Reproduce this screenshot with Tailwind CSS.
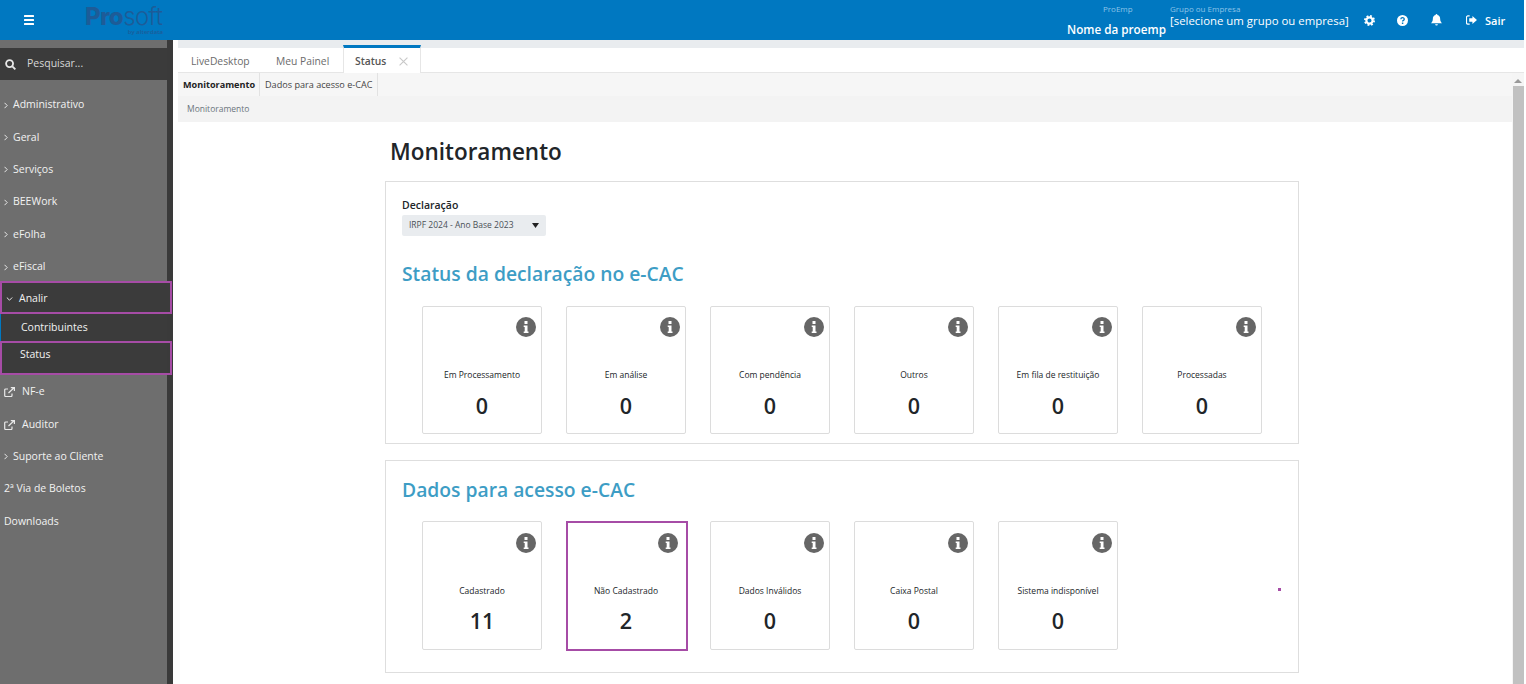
<!DOCTYPE html>
<html lang="pt-BR">
<head>
    <meta charset="UTF-8">
    <meta name="viewport" content="width=device-width, initial-scale=1.0">
    <title>Monitoramento</title>
    <script src="https://cdn.jsdelivr.net/npm/@tailwindcss/browser@4"></script>
</head>
<body class="h-[684px] overflow-hidden bg-white font-['Open_Sans',sans-serif] text-[#212529]">
    <!-- topo -->
    <header class="h-10 w-[1524px] bg-[#0078c1] flex items-center text-white">
        <div class="w-[85px] pl-6 flex">
            <svg class="w-[10px] h-[10px]" viewBox="0 0 10 10" fill="#fff"><rect width="10" height="2" rx=".5"/><rect y="4" width="10" height="2" rx=".5"/><rect y="8" width="10" height="2" rx=".5"/></svg>
        </div>
        <div class="w-[78px] h-[32px] flex flex-col text-[#1d5c98] -mt-[1px]">
            <div class="text-[24px] leading-[25px] tracking-[-0.6px] font-['Inter',sans-serif] whitespace-nowrap"><span class="font-extrabold">Pro</span><span class="font-light">soft</span></div>
            <div class="text-[6px] leading-[6px] text-right font-semibold">by alterdata</div>
        </div>
        <div class="ml-[904px] w-[103px] flex flex-col h-10 items-start">
            <div class="ml-[36px] mt-[3px] text-[8px] leading-[11px] text-[#8cc3e8]">ProEmp</div>
            <div class="mt-[6px] text-[11.700px] leading-[18px] font-semibold whitespace-nowrap">Nome da proemp</div>
        </div>
        <div class="w-[183px] flex flex-col h-10 items-start">
            <div class="mt-[3px] text-[8px] leading-[11px] text-[#8cc3e8]">Grupo ou Empresa</div>
            <div class="text-[11.400px] leading-[13px] whitespace-nowrap">[selecione um grupo ou empresa]</div>
        </div>
        <div class="flex items-center">
            <svg class="ml-[11px] w-[11px] h-[11px]" viewBox="0 0 12 12"><circle cx="6" cy="6" r="3.400" fill="none" stroke="#fff" stroke-width="2.400"/><circle cx="6" cy="6" r="5" fill="none" stroke="#fff" stroke-width="2" stroke-dasharray="2 1.930"/></svg>
            <svg class="ml-[22px] w-[11px] h-[11px]" viewBox="0 0 12 12"><circle cx="6" cy="6" r="6" fill="#fff"/><path d="M4.200 4.700c0-2.300 3.700-2.300 3.700-.2 0 1.400-1.800 1.300-1.800 2.600" fill="none" stroke="#0078c1" stroke-width="1.400"/><rect x="5.300" y="8.200" width="1.600" height="1.600" fill="#0078c1"/></svg>
            <svg class="ml-[23px] w-[11px] h-[12px]" viewBox="0 0 12 13" fill="#fff"><path d="M6 0a1 1 0 0 1 1 1.100C9.200 1.500 10 3.300 10 5.500c0 2.500 1 3.500 2 4.500H0c1-1 2-2 2-4.500C2 3.300 2.800 1.500 5 1.100A1 1 0 0 1 6 0zM4.500 11h3a1.500 1.500 0 0 1-3 0z"/></svg>
            <svg class="ml-[24px] w-[11px] h-[10px]" viewBox="0 0 12 11" fill="#fff"><path d="M4 1H2a1.500 1.500 0 0 0-1.500 1.500v6A1.500 1.500 0 0 0 2 10h2" fill="none" stroke="#fff" stroke-width="1.300"/><path d="M7 1.200 12 5.500 7 9.800V7.300H3.500V3.700H7z"/></svg>
            <span class="ml-[8px] text-[11px] font-semibold leading-none">Sair</span>
        </div>
    </header>

    <div class="flex h-[644px]">
        <!-- menu lateral -->
        <aside class="w-[167px] shrink-0 bg-[#6e6e6e] text-[#f2f2f2] text-[10.500px] font-medium pt-2">
            <div class="h-8 bg-[#3b3b3b] flex items-center pl-[5px] font-normal text-[#d8d8d8]">
                <svg class="w-[11px] h-[11px]" viewBox="0 0 12 12" fill="none" stroke="#e8e8e8" stroke-width="2"><circle cx="5" cy="5" r="3.800"/><path d="M8 8l3.300 3.300"/></svg>
                <span class="ml-[11px]">Pesquisar...</span>
            </div>
            <nav class="mt-[9px]">
                <a class="h-[32.400px] flex items-center pl-[4px]"><svg class="w-[4px] h-[7px] mr-[5px]" viewBox="0 0 4 7" fill="none" stroke="#e8e8e8"><path d="M.5.800 3.200 3.500.5 6.200"/></svg>Administrativo</a>
                <a class="h-[32.400px] flex items-center pl-[4px]"><svg class="w-[4px] h-[7px] mr-[5px]" viewBox="0 0 4 7" fill="none" stroke="#e8e8e8"><path d="M.5.800 3.200 3.500.5 6.200"/></svg>Geral</a>
                <a class="h-[32.400px] flex items-center pl-[4px]"><svg class="w-[4px] h-[7px] mr-[5px]" viewBox="0 0 4 7" fill="none" stroke="#e8e8e8"><path d="M.5.800 3.200 3.500.5 6.200"/></svg>Serviços</a>
                <a class="h-[32.400px] flex items-center pl-[4px]"><svg class="w-[4px] h-[7px] mr-[5px]" viewBox="0 0 4 7" fill="none" stroke="#e8e8e8"><path d="M.5.800 3.200 3.500.5 6.200"/></svg>BEEWork</a>
                <a class="h-[32.400px] flex items-center pl-[4px]"><svg class="w-[4px] h-[7px] mr-[5px]" viewBox="0 0 4 7" fill="none" stroke="#e8e8e8"><path d="M.5.800 3.200 3.500.5 6.200"/></svg>eFolha</a>
                <a class="h-[32.400px] flex items-center pl-[4px]"><svg class="w-[4px] h-[7px] mr-[5px]" viewBox="0 0 4 7" fill="none" stroke="#e8e8e8"><path d="M.5.800 3.200 3.500.5 6.200"/></svg>eFiscal</a>
            </nav>
            <div class="h-[93px] -mt-[2.400px] bg-[#3b3b3b] relative">
                <div class="h-[33px] w-[172px] border-2 border-[#a64ca6] bg-[#3b3b3b] flex items-center pl-[4px] pt-[3px] absolute top-0 left-0 z-10">
                    <svg class="w-[7px] h-[4px] mr-[6px]" viewBox="0 0 7 4" fill="none" stroke="#e8e8e8"><path d="M.8.500 3.500 3.200 6.200.500"/></svg>Analir
                </div>
                <div class="pt-[33px]">
                    <div class="h-[28px] pl-[20px] flex items-center border-l border-[#0078c1]">Contribuintes</div>
                    <div class="h-[32px] pl-[20px] flex items-center -mt-[1px] pb-[4px]">Status</div>
                </div>
                <div class="w-[172px] h-[34px] border-2 border-[#a64ca6] absolute top-[60px] left-0 z-10"></div>
            </div>
            <a class="h-[32.400px] mt-[2px] flex items-center pl-[4px]"><svg class="w-[11px] h-[10px] mr-[7px]" viewBox="0 0 11 10" fill="none" stroke="#e8e8e8" stroke-width="1.200"><path d="M8 6.500V8.500a1 1 0 0 1-1 1H1.700a1 1 0 0 1-1-1V3a1 1 0 0 1 1-1H4M4.500 6 10 .8M6.800.6h3.600v3.500"/></svg>NF-e</a>
            <a class="h-[32.400px] flex items-center pl-[4px]"><svg class="w-[11px] h-[10px] mr-[7px]" viewBox="0 0 11 10" fill="none" stroke="#e8e8e8" stroke-width="1.200"><path d="M8 6.500V8.500a1 1 0 0 1-1 1H1.700a1 1 0 0 1-1-1V3a1 1 0 0 1 1-1H4M4.500 6 10 .8M6.800.6h3.600v3.500"/></svg>Auditor</a>
            <a class="h-[32.400px] flex items-center pl-[4px]"><svg class="w-[4px] h-[7px] mr-[5px]" viewBox="0 0 4 7" fill="none" stroke="#e8e8e8"><path d="M.5.800 3.200 3.500.5 6.200"/></svg>Suporte ao Cliente</a>
            <a class="h-[32.400px] flex items-center pl-[4px]">2ª Via de Boletos</a>
            <a class="h-[32.400px] flex items-center pl-[4px]">Downloads</a>
        </aside>
        <div class="w-[6px] shrink-0 bg-[#3a3a3a]"></div>

        <!-- conteudo -->
        <main class="w-[1351px] shrink-0 flex flex-col">
            <div class="h-2 bg-[#e9ecef] ml-[5px]"></div>
            <div class="h-[25px] ml-[5px] flex text-[10.300px] text-[#6b6b6b] border-b border-[#e6e6e6] relative">
                <div class="w-[85px] pl-[13px] pt-[6px]">LiveDesktop</div>
                <div class="w-[80px] pl-[13px] pt-[6px]">Meu Painel</div>
                <div class="w-[78px] h-[28px] -mt-[3px] border-t-[3px] border-x border-[#0078c1] border-x-[#e6e6e6] bg-white pl-[11px] pt-[6px] flex text-[#555] font-semibold">
                    Status
                    <svg class="ml-[13px] mt-[3px] w-[9px] h-[9px]" viewBox="0 0 8 8" stroke="#c8c8c8"><path d="M.5.500l7 7M7.500.500l-7 7"/></svg>
                </div>
            </div>
            <div class="flex-1 flex min-h-0">
                <div class="w-[1339px] shrink-0 flex flex-col">
                    <div class="h-[23px] ml-[5px] bg-[#f6f6f6] flex items-center text-[9.100px] pl-[5px]">
                        <span class="font-bold text-[#222] pr-[4px] border-r border-[#e2e2e2] h-full flex items-center">Monitoramento</span>
                        <span class="px-[5px] text-[#444] border-r border-[#e2e2e2] h-full flex items-center">Dados para acesso e-CAC</span>
                    </div>
                    <div class="h-[26px] ml-[5px] bg-[#f3f3f3] pl-[9px] flex items-center text-[8.500px] text-[#6c757d]">Monitoramento</div>

                    <!-- paginas -->
                    <div class="pl-[212px] relative">
                        <h1 class="pl-[5px] mt-[12px] text-[22.500px] leading-[36px] font-semibold">Monitoramento</h1>
                        <section class="mt-[11px] w-[914px] h-[263px] border border-[#dedede] px-4 pt-[15px]">
                            <label class="block text-[10.500px] leading-[16px] font-semibold">Declaração</label>
                            <div class="mt-[2px] w-[144px] h-[21px] rounded-[2px] bg-[#e9ecef] flex items-center justify-between pl-[7px] pr-[7px] text-[8.500px] text-[#495057]">
                                IRPF 2024 - Ano Base 2023
                                <svg class="w-[7px] h-[5px]" viewBox="0 0 7 5" fill="#222"><path d="M0 0h7L3.500 5z"/></svg>
                            </div>
                            <h2 class="mt-[24px] text-[19.300px] leading-[28px] font-semibold text-[#3d9dc5]">Status da declaração no e-CAC</h2>
                            <div class="mt-[18px] pl-[20px] flex gap-6">
                                <div class="w-[120px] h-[128px] border border-[#dcdcdc] rounded-[2px] relative flex flex-col items-center">
                                    <svg class="absolute top-[10px] right-[5px] w-5 h-5" viewBox="0 0 20 20"><circle cx="10" cy="10" r="10" fill="#666"/><rect x="8.500" y="4" width="3" height="3" fill="#fff"/><path d="M7.700 8.500h3.800v6h1v1.500H7.700v-1.500h1v-4.500h-1z" fill="#fff"/></svg>
                                    <span class="mt-[61px] text-[8.500px] leading-[14px]">Em Processamento</span>
                                    <span class="mt-[9px] text-[21.500px] leading-[30px] font-semibold">0</span>
                                </div>
                                <div class="w-[120px] h-[128px] border border-[#dcdcdc] rounded-[2px] relative flex flex-col items-center">
                                    <svg class="absolute top-[10px] right-[5px] w-5 h-5" viewBox="0 0 20 20"><circle cx="10" cy="10" r="10" fill="#666"/><rect x="8.500" y="4" width="3" height="3" fill="#fff"/><path d="M7.700 8.500h3.800v6h1v1.500H7.700v-1.500h1v-4.500h-1z" fill="#fff"/></svg>
                                    <span class="mt-[61px] text-[8.500px] leading-[14px]">Em análise</span>
                                    <span class="mt-[9px] text-[21.500px] leading-[30px] font-semibold">0</span>
                                </div>
                                <div class="w-[120px] h-[128px] border border-[#dcdcdc] rounded-[2px] relative flex flex-col items-center">
                                    <svg class="absolute top-[10px] right-[5px] w-5 h-5" viewBox="0 0 20 20"><circle cx="10" cy="10" r="10" fill="#666"/><rect x="8.500" y="4" width="3" height="3" fill="#fff"/><path d="M7.700 8.500h3.800v6h1v1.500H7.700v-1.500h1v-4.500h-1z" fill="#fff"/></svg>
                                    <span class="mt-[61px] text-[8.500px] leading-[14px]">Com pendência</span>
                                    <span class="mt-[9px] text-[21.500px] leading-[30px] font-semibold">0</span>
                                </div>
                                <div class="w-[120px] h-[128px] border border-[#dcdcdc] rounded-[2px] relative flex flex-col items-center">
                                    <svg class="absolute top-[10px] right-[5px] w-5 h-5" viewBox="0 0 20 20"><circle cx="10" cy="10" r="10" fill="#666"/><rect x="8.500" y="4" width="3" height="3" fill="#fff"/><path d="M7.700 8.500h3.800v6h1v1.500H7.700v-1.500h1v-4.500h-1z" fill="#fff"/></svg>
                                    <span class="mt-[61px] text-[8.500px] leading-[14px]">Outros</span>
                                    <span class="mt-[9px] text-[21.500px] leading-[30px] font-semibold">0</span>
                                </div>
                                <div class="w-[120px] h-[128px] border border-[#dcdcdc] rounded-[2px] relative flex flex-col items-center">
                                    <svg class="absolute top-[10px] right-[5px] w-5 h-5" viewBox="0 0 20 20"><circle cx="10" cy="10" r="10" fill="#666"/><rect x="8.500" y="4" width="3" height="3" fill="#fff"/><path d="M7.700 8.500h3.800v6h1v1.500H7.700v-1.500h1v-4.500h-1z" fill="#fff"/></svg>
                                    <span class="mt-[61px] text-[8.500px] leading-[14px]">Em fila de restituição</span>
                                    <span class="mt-[9px] text-[21.500px] leading-[30px] font-semibold">0</span>
                                </div>
                                <div class="w-[120px] h-[128px] border border-[#dcdcdc] rounded-[2px] relative flex flex-col items-center">
                                    <svg class="absolute top-[10px] right-[5px] w-5 h-5" viewBox="0 0 20 20"><circle cx="10" cy="10" r="10" fill="#666"/><rect x="8.500" y="4" width="3" height="3" fill="#fff"/><path d="M7.700 8.500h3.800v6h1v1.500H7.700v-1.500h1v-4.500h-1z" fill="#fff"/></svg>
                                    <span class="mt-[61px] text-[8.500px] leading-[14px]">Processadas</span>
                                    <span class="mt-[9px] text-[21.500px] leading-[30px] font-semibold">0</span>
                                </div>
                            </div>
                        </section>
                        <section class="mt-[16px] w-[914px] h-[213px] border border-[#dedede] px-4 pt-[15px] relative">
                            <h2 class="text-[19.300px] leading-[28px] font-semibold text-[#3d9dc5]">Dados para acesso e-CAC</h2>
                            <div class="mt-[17px] pl-[20px] flex gap-6 items-start">
                                <div class="w-[120px] h-[129px] border border-[#dcdcdc] rounded-[2px] relative flex flex-col items-center">
                                    <svg class="absolute top-[11px] right-[5px] w-5 h-5" viewBox="0 0 20 20"><circle cx="10" cy="10" r="10" fill="#666"/><rect x="8.500" y="4" width="3" height="3" fill="#fff"/><path d="M7.700 8.500h3.800v6h1v1.500H7.700v-1.500h1v-4.500h-1z" fill="#fff"/></svg>
                                    <span class="mt-[62px] text-[8.500px] leading-[14px]">Cadastrado</span>
                                    <span class="mt-[8px] text-[21.500px] leading-[30px] font-semibold">11</span>
                                </div>
                                <div class="w-[122px] h-[130px] -mr-[2px] pr-[2px] border-[2px] border-[#a64ca6] relative flex flex-col items-center">
                                    <svg class="absolute top-[10px] right-[8px] w-5 h-5" viewBox="0 0 20 20"><circle cx="10" cy="10" r="10" fill="#666"/><rect x="8.500" y="4" width="3" height="3" fill="#fff"/><path d="M7.700 8.500h3.800v6h1v1.500H7.700v-1.500h1v-4.500h-1z" fill="#fff"/></svg>
                                    <span class="mt-[61px] text-[8.500px] leading-[14px]">Não Cadastrado</span>
                                    <span class="mt-[8px] text-[21.500px] leading-[30px] font-semibold">2</span>
                                </div>
                                <div class="w-[120px] h-[129px] border border-[#dcdcdc] rounded-[2px] relative flex flex-col items-center">
                                    <svg class="absolute top-[11px] right-[5px] w-5 h-5" viewBox="0 0 20 20"><circle cx="10" cy="10" r="10" fill="#666"/><rect x="8.500" y="4" width="3" height="3" fill="#fff"/><path d="M7.700 8.500h3.800v6h1v1.500H7.700v-1.500h1v-4.500h-1z" fill="#fff"/></svg>
                                    <span class="mt-[62px] text-[8.500px] leading-[14px]">Dados Inválidos</span>
                                    <span class="mt-[8px] text-[21.500px] leading-[30px] font-semibold">0</span>
                                </div>
                                <div class="w-[120px] h-[129px] border border-[#dcdcdc] rounded-[2px] relative flex flex-col items-center">
                                    <svg class="absolute top-[11px] right-[5px] w-5 h-5" viewBox="0 0 20 20"><circle cx="10" cy="10" r="10" fill="#666"/><rect x="8.500" y="4" width="3" height="3" fill="#fff"/><path d="M7.700 8.500h3.800v6h1v1.500H7.700v-1.500h1v-4.500h-1z" fill="#fff"/></svg>
                                    <span class="mt-[62px] text-[8.500px] leading-[14px]">Caixa Postal</span>
                                    <span class="mt-[8px] text-[21.500px] leading-[30px] font-semibold">0</span>
                                </div>
                                <div class="w-[120px] h-[129px] border border-[#dcdcdc] rounded-[2px] relative flex flex-col items-center">
                                    <svg class="absolute top-[11px] right-[5px] w-5 h-5" viewBox="0 0 20 20"><circle cx="10" cy="10" r="10" fill="#666"/><rect x="8.500" y="4" width="3" height="3" fill="#fff"/><path d="M7.700 8.500h3.800v6h1v1.500H7.700v-1.500h1v-4.500h-1z" fill="#fff"/></svg>
                                    <span class="mt-[62px] text-[8.500px] leading-[14px]">Sistema indisponível</span>
                                    <span class="mt-[8px] text-[21.500px] leading-[30px] font-semibold">0</span>
                                </div>
                            </div>
                            <span class="absolute left-[892px] top-[127px] w-[3px] h-[3px] bg-[#a64ca6]"></span>
                        </section>
                    </div>
                </div>
                <!-- scrollbar -->
                <div class="w-[12px] bg-[#f5f5f5] flex flex-col items-center">
                    <svg class="mt-[6px] w-[8px] h-[4px]" viewBox="0 0 8 4" fill="#9a9a9a"><path d="M4 0l4 4H0z"/></svg>
                    <div class="mt-[3px] w-[11px] flex-1 ml-[1px] bg-[#c1c1c1]"></div>
                </div>
            </div>
        </main>
    </div>
</body>
</html>
